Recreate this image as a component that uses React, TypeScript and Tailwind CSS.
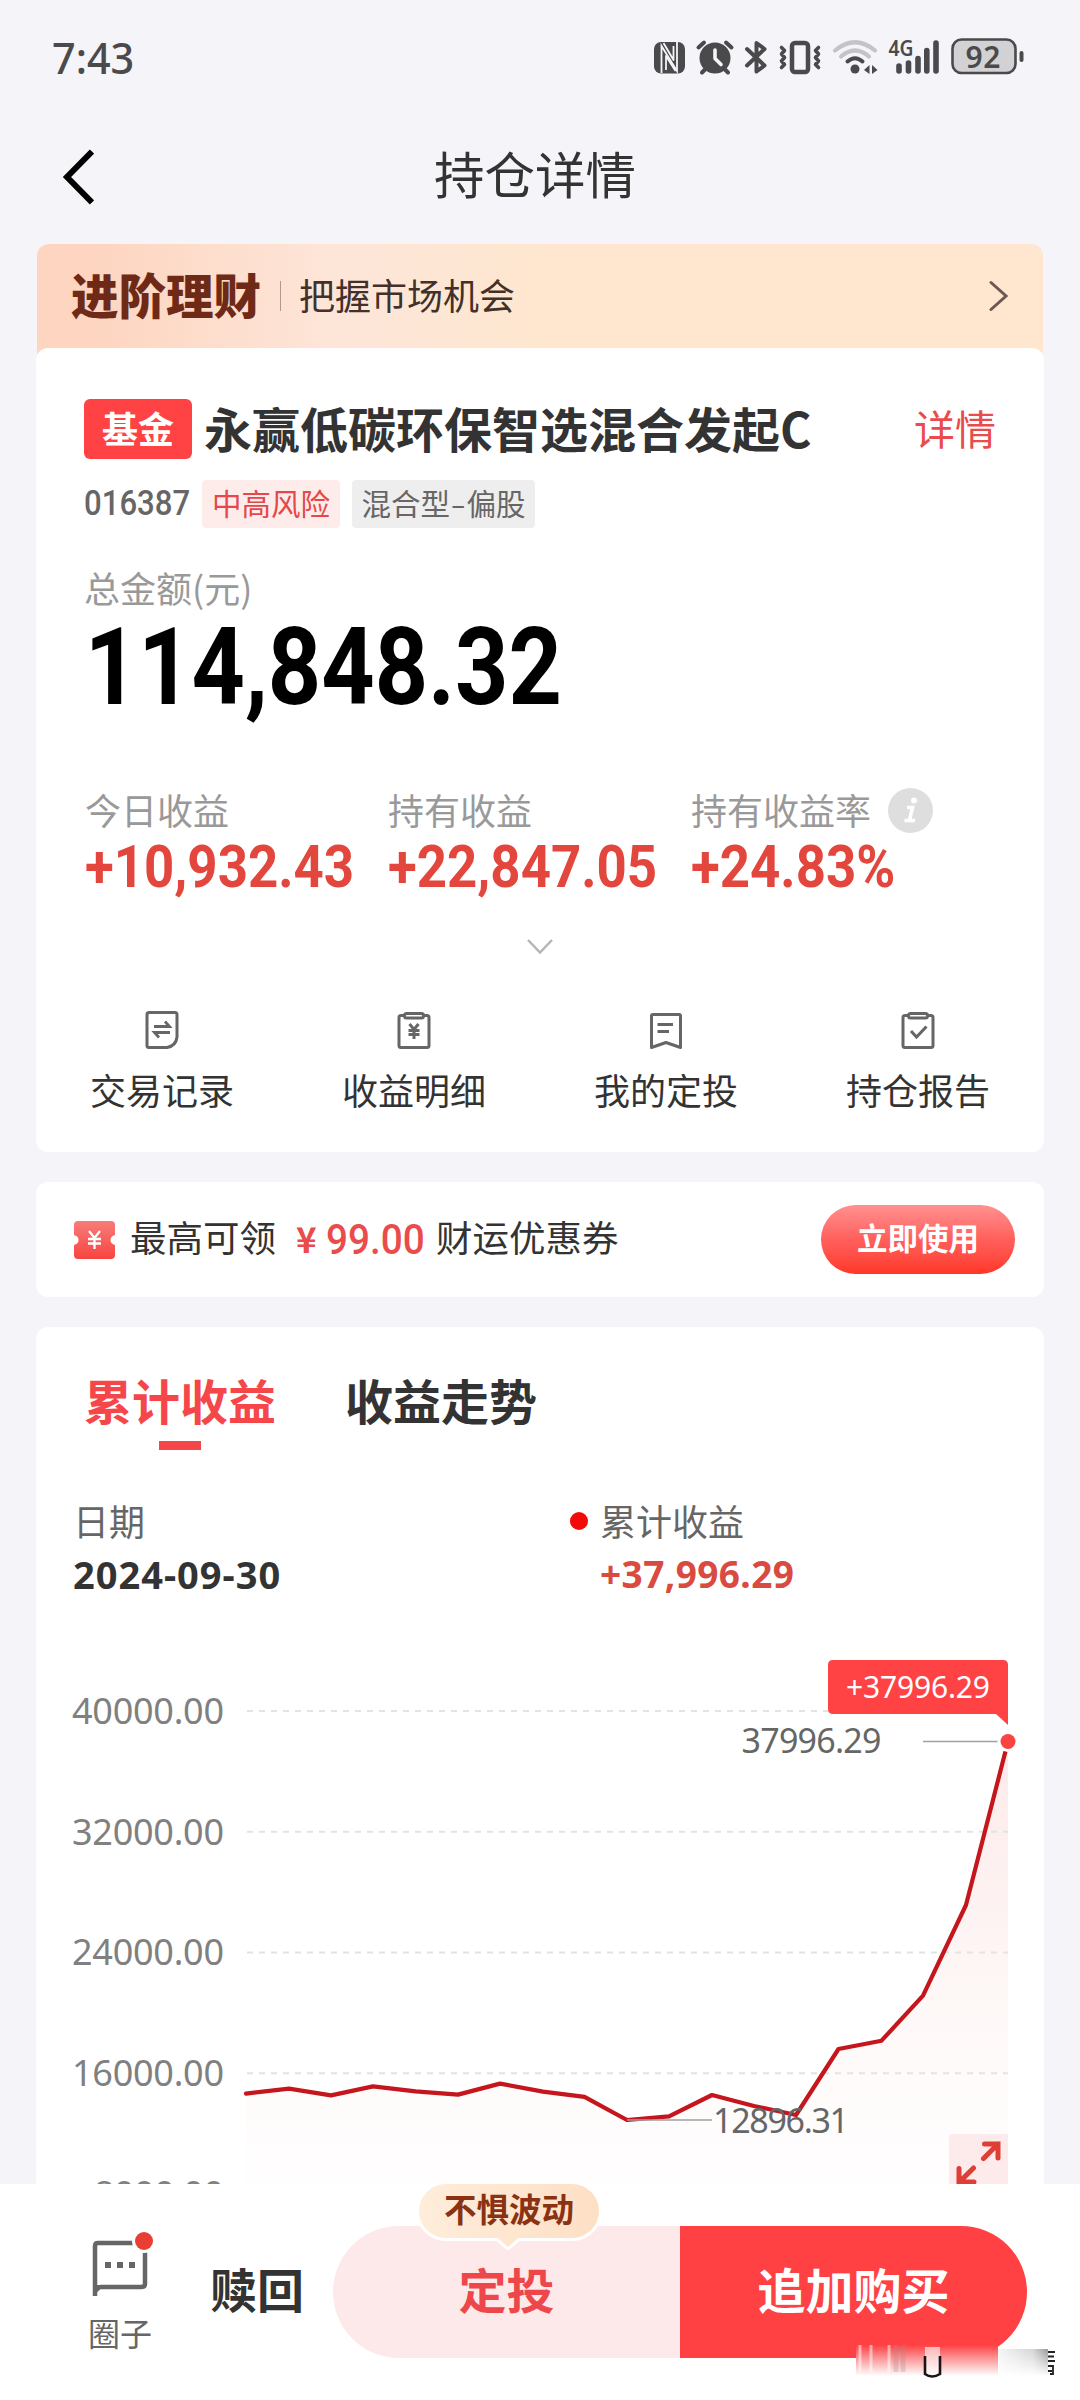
import type { ReactNode } from "react";

const Y_TICKS = [
  { label: "40000.00", y: 1711 },
  { label: "32000.00", y: 1831.7 },
  { label: "24000.00", y: 1952.4 },
  { label: "16000.00", y: 2073.3 },
];

const POINTS =
  "246,2093.6 289,2088.6 331,2095.4 373,2086.4 415.6,2091.4 458,2094.6 500,2083.6 543,2091.6 584.5,2096.8 627,2120 669,2116.4 712,2095 754,2106 796,2115 838.5,2049 881.5,2040.7 923,1995.7 966,1905 1008,1741.5";

function StatusIcons() {
  return (
    <svg width="380" height="50" viewBox="650 30 380 50" fill="none" stroke="#4a4a4c" strokeLinecap="round" strokeLinejoin="round">
      {/* nfc */}
      <rect x="654" y="42" width="31" height="31.5" rx="7" fill="#4a4a4c" stroke="none" />
      <path d="M661.500 73V46L677 71V42" stroke="#f4f4f9" strokeWidth="1.800" strokeLinecap="butt" strokeLinejoin="miter" />
      <path d="M666 70V56L675.500 71M663.500 43L673.500 60V46" stroke="#f4f4f9" strokeWidth="1.800" strokeLinecap="butt" />
      {/* alarm */}
      <circle cx="715" cy="58" r="15.500" fill="#4a4a4c" stroke="none" />
      <path d="M698.500 47.500L704 42.500M731.500 47.500L726 42.500M702 72.500L705.500 69M728 72.500L724.500 69" strokeWidth="4" />
      <path d="M715 50V58.500L721 64.500" stroke="#f4f4f9" strokeWidth="3.600" />
      {/* bluetooth */}
      <path d="M747 49L764.500 65.500L756.500 71.500V43L764.500 49L747 65.500" strokeWidth="4" />
      {/* vibrate */}
      <rect x="792" y="43" width="16" height="29" rx="3" strokeWidth="4.500" />
      <path d="M781.500 47.500L784.500 50.500L781.500 54L784.500 57.500L781.500 61L784.500 64.500L781.500 67.500M818.500 47.500L815.500 50.500L818.500 54L815.500 57.500L818.500 61L815.500 64.500L818.500 67.500" strokeWidth="3.600" />
      {/* wifi */}
      <g stroke="#c3c3c8" strokeWidth="4.200">
        <path d="M835 50.500Q855 34 875 50.500" />
        <path d="M841 56.500Q855 44.500 869 56.500" />
      </g>
      <path d="M847.500 61.500Q855 55 862.500 61.500" strokeWidth="4" />
      <circle cx="855" cy="69" r="4.500" fill="#4a4a4c" stroke="none" />
      <path d="M864 70L869.500 65V74ZM877.500 70L872 65V74Z" fill="#4a4a4c" stroke="none" />
      {/* signal */}
      <text x="888.500" y="55.500" fill="#4a4a4c" stroke="none" textLength="25" lengthAdjust="spacingAndGlyphs" className="font-['Noto_Sans'] text-[21px] font-semibold">4G</text>
      <path d="M899 66V71M908.500 63V71M918 58.500V71M926.800 50.500V71M936 43V71" strokeWidth="5.600" />
      {/* battery */}
      <rect x="952.500" y="39.500" width="63" height="33.500" rx="9" fill="#d2d2d5" strokeWidth="2.600" />
      <path d="M1021.500 53V60" strokeWidth="4" />
      <text x="965.500" y="67.500" fill="#4a4a4c" stroke="none" textLength="35" className="font-['Noto_Sans'] text-[30px] font-semibold">92</text>
    </svg>
  );
}

function RecordIcon() {
  return (
    <svg width="34" height="38" viewBox="0 0 34 38" fill="none" stroke="#666" strokeWidth="3">
      <path d="M4 1.500H30Q32 1.500 32 3.500V26Q31 35 22 36.500H4Q2 36.500 2 34.500V3.500Q2 1.500 4 1.500Z" />
      <path d="M9 15.500H24.500L20 10.500M25 21.500H9.500L14 26.500" strokeWidth="2.800" />
    </svg>
  );
}

function ClipIcon({ children }: { children: ReactNode }) {
  return (
    <svg width="34" height="38" viewBox="0 0 34 38" fill="none" stroke="#666" strokeWidth="3">
      <path d="M7 4.500H4Q2 4.500 2 6.500V34.500Q2 36.500 4 36.500H30Q32 36.500 32 34.500V6.500Q32 4.500 30 4.500H27" />
      <rect x="7.500" y="2.500" width="19" height="4.500" rx="2" />
      {children}
    </svg>
  );
}

function PlanIcon() {
  return (
    <svg width="34" height="38" viewBox="0 0 34 38" fill="none" stroke="#666" strokeWidth="3" strokeLinejoin="round">
      <path d="M4 3.500H30Q31.500 3.500 31.500 5V36.500L17 31.500L2.500 36.500V5Q2.500 3.500 4 3.500Z" />
      <path d="M8.500 13.500H24M8.500 20.500H20" />
    </svg>
  );
}

const SHORTCUTS = [
  { label: "交易记录", icon: <RecordIcon /> },
  {
    label: "收益明细",
    icon: (
      <ClipIcon>
        <path d="M12.500 13L17 18.500L21.500 13M17 18.500V28M11.500 19.500H22.500M11.500 23.500H22.500" />
      </ClipIcon>
    ),
  },
  { label: "我的定投", icon: <PlanIcon /> },
  {
    label: "持仓报告",
    icon: (
      <ClipIcon>
        <path d="M10 20L15.500 26L25.500 15.500" />
      </ClipIcon>
    ),
  },
];

const METRICS = [
  { label: "今日收益", value: "+10,932.43" },
  { label: "持有收益", value: "+22,847.05" },
  { label: "持有收益率", value: "+24.83%", info: true },
];

function Chart() {
  return (
    <svg width="1008" height="544" viewBox="36 1640 1008 544" fill="none" className="mt-[46px] font-['Noto_Sans']">
      <defs>
        <linearGradient id="area" x1="0" y1="1741" x2="0" y2="2184" gradientUnits="userSpaceOnUse">
          <stop offset="0" stopColor="#fdeaea" />
          <stop offset="0.7" stopColor="#fefaf9" />
          <stop offset="1" stopColor="#fffefe" />
        </linearGradient>
      </defs>
      <polygon points={`246,2184 ${POINTS} 1008,2184`} fill="url(#area)" />
      {Y_TICKS.map((t) => (
        <g key={t.label}>
          <text x="72" y={t.y + 13} fill="#808080" textLength="152" className="text-[36px]">{t.label}</text>
          <path d={`M247 ${t.y}H1008`} stroke="#e3e3e3" strokeWidth="2" strokeDasharray="6 6" />
        </g>
      ))}
      <text x="94" y="2207" fill="#808080" textLength="130" className="text-[36px]">8000.00</text>
      <polyline points={POINTS} stroke="#c4161c" strokeWidth="4.200" strokeLinejoin="round" strokeLinecap="round" />
      <path d="M627 2120H712M923 1741.500H998" stroke="#a0a0a0" strokeWidth="1.500" />
      <text x="713" y="2132.500" fill="#666" textLength="136" className="text-[34px]">12896.31</text>
      <text x="741.500" y="1753" fill="#666" textLength="140" className="text-[34px]">37996.29</text>
      <circle cx="1008" cy="1741.500" r="10.500" fill="#fff" />
      <circle cx="1008" cy="1741.500" r="7.500" fill="#fb4343" />
      <path d="M833 1660H1003Q1008 1660 1008 1665V1725L996 1714H833Q828 1714 828 1709V1665Q828 1660 833 1660Z" fill="#ff4345" />
      <text x="846" y="1697.500" fill="#fff" textLength="144" className="text-[30px]">+37996.29</text>
      {/* full screen toggle */}
      <path d="M949 2184V2138Q949 2134 953 2134H1008V2184Z" fill="#fdeaea" />
      <path d="M983.500 2158.500L998 2144M984.500 2144H998V2158M973.500 2168L959 2182.500M959 2168.500V2182H974" stroke="#dd3f36" strokeWidth="5" strokeLinecap="round" />
    </svg>
  );
}

export default function App() {
  return (
    <div className="relative flex h-[2400px] w-[1080px] flex-col overflow-hidden bg-[#f4f4f9] font-['Noto_Sans_CJK_SC',sans-serif] text-[#333]">
      <main className="flex h-[2184px] shrink-0 flex-col overflow-hidden">
        <div className="flex h-[116px] shrink-0 items-start justify-between pt-[30px] pr-[50px] pl-[52px]">
          <span className="origin-left scale-x-[0.94] font-['Noto_Sans'] text-[44px] leading-[54px] font-medium text-[#4a4a4c]">7:43</span>
          <StatusIcons />
        </div>

        <header className="flex h-[128px] shrink-0 items-start pt-[30px] pl-[58px]">
          <svg width="36" height="60" viewBox="0 0 36 60" fill="none" stroke="#000" strokeWidth="6">
            <path d="M34 5.500L9 31L34 56.500" />
          </svg>
          <h1 className="-mt-[2px] ml-[340px] text-[50.500px] leading-[56px]">持仓详情</h1>
        </header>

        <div className="mx-[37px] flex h-[116px] shrink-0 items-center rounded-t-xl bg-linear-to-r from-[#fdd5c0] from-5% via-[#fde6d9] via-30% to-[#fee6cf] to-50% pr-[35px] pb-3 pl-[34px]">
          <span className="-mt-1 text-[47.500px] leading-[50px] font-black text-[#6e2a16]">进阶理财</span>
          <span className="ml-[19px] h-[30px] w-px bg-[#b49a8c]" />
          <span className="-mt-1 ml-[18px] text-[36px] leading-[44px] text-[#42302a]">把握市场机会</span>
          <svg width="20" height="32" viewBox="0 0 20 32" fill="none" stroke="#6b5a52" strokeWidth="3" strokeLinecap="round" className="ml-auto">
            <path d="M3 2.500L18 16L3 29.500" />
          </svg>
        </div>

        <section className="mx-9 -mt-3 flex h-[804px] shrink-0 flex-col rounded-xl bg-white pt-[51px]">
          <div className="flex h-[60px] items-center pr-12 pl-12">
            <span className="flex h-[60px] w-[108px] items-center justify-center rounded-md bg-[#ff4345] pb-1 text-[36px] leading-none font-bold text-white">基金</span>
            <h2 className="-mt-[5px] ml-3 text-[48px] leading-[56px] font-bold whitespace-nowrap">永赢低碳环保智选混合发起C</h2>
            <span className="-mt-1 ml-auto text-[41px] leading-[48px] text-[#ea4b4b]">详情</span>
          </div>
          <div className="mt-[21px] flex h-12 items-center pl-12 text-[29.500px]">
            <span className="-mt-[2px] w-[118px] origin-left scale-x-[0.89] font-[Roboto] text-[35px] leading-none font-medium text-[#666]">016387</span>
            <span className="flex h-12 w-[138px] items-center justify-center rounded bg-[#fdecea] pb-[3px] leading-none text-[#e5484a]">中高风险</span>
            <span className="ml-3 flex h-12 w-[183px] items-center justify-center rounded bg-[#eeeeee] pb-[3px] leading-none text-[#666]">
              混合型<span className="scale-x-150 px-[3px]">-</span>偏股
            </span>
          </div>
          <div className="mt-[39px] h-10 pl-12 text-[36px] leading-10 text-[#999]">总金额(元)</div>
          <div className="mt-[21px] h-20 origin-left scale-x-[0.87] pl-[56px] font-[Roboto] text-[107px] leading-[80px] font-bold text-black">114,848.32</div>

          <div className="mt-[79px] flex pl-[49px]">
            {METRICS.map((m) => (
              <div key={m.label} className="w-[303px] shrink-0">
                <div className="flex h-[46px] items-center text-[36px] leading-10 text-[#999]">
                  <span className="-mt-[3px]">{m.label}</span>
                  {m.info && (
                    <svg width="45" height="45" viewBox="0 0 45 45" className="ml-[17px]">
                      <circle cx="22.500" cy="22.500" r="22.500" fill="#dedede" />
                      <circle cx="26" cy="12.500" r="3" fill="#fff" />
                      <path d="M19 19.500H24.500L21.500 32M16.500 32.500H27" fill="none" stroke="#fff" strokeWidth="3.600" />
                    </svg>
                  )}
                </div>
                <div className="mt-1 h-[60px] origin-left scale-x-[0.88] font-[Roboto] text-[60px] leading-[60px] font-bold whitespace-nowrap text-[#e2463c]">{m.value}</div>
              </div>
            ))}
          </div>

          <svg width="28" height="18" viewBox="0 0 28 18" fill="none" stroke="#b5b5b5" strokeWidth="2.500" className="mt-[41px] self-center">
            <path d="M2 2L14 14.500L26 2" />
          </svg>

          <div className="mt-[55px] grid grid-cols-4">
            {SHORTCUTS.map((s) => (
              <div key={s.label} className="flex flex-col items-center">
                {s.icon}
                <span className="mt-5 text-[36px] leading-10">{s.label}</span>
              </div>
            ))}
          </div>
        </section>

        <section className="mx-9 mt-[30px] flex h-[115px] shrink-0 items-center rounded-xl bg-white pr-[29px] pl-[38px] text-[36.500px] leading-[44px]">
          <svg width="41" height="38" viewBox="0 0 41 38" fill="none">
            <defs>
              <linearGradient id="ticket" x1="0" y1="0" x2="0" y2="38" gradientUnits="userSpaceOnUse">
                <stop stopColor="#f77d7a" />
                <stop offset="1" stopColor="#f8443f" />
              </linearGradient>
            </defs>
            <path d="M4 0H37Q41 0 41 4V14Q36.500 15 36.500 19Q36.500 23 41 24V34Q41 38 37 38H4Q0 38 0 34V24Q4.500 23 4.500 19Q4.500 15 0 14V4Q0 0 4 0Z" fill="url(#ticket)" />
            <path d="M15 10L20.500 17L26 10M20.500 17V28M14 18H27M14 22.500H27" stroke="#fff" strokeWidth="2.300" />
          </svg>
          <span className="-mt-[5px] ml-[15px]">最高可领</span>
          <span className="-mt-[3px] ml-5 w-[30px] text-[35px] font-bold text-[#ea4b4b]">¥</span>
          <span className="-mt-[2px] w-[110px] origin-left scale-x-[0.9] font-[Roboto] text-[43px] font-medium text-[#ea4b4b]">99.00</span>
          <span className="-mt-[5px]">财运优惠券</span>
          <button className="ml-auto h-[69px] w-[194px] rounded-full bg-linear-to-b from-[#ff9090] via-[#ff5f5c] to-[#ff3626] pb-[5px] text-[30.500px] leading-[60px] font-bold text-white">立即使用</button>
        </section>

        <section className="mx-9 mt-[30px] flex h-[900px] shrink-0 flex-col rounded-t-xl bg-white pt-[42px]">
          <div className="flex gap-[69px] pl-12 text-[48px] leading-[60px] font-bold">
            <div className="flex flex-col items-center text-[#f54749]">
              累计收益
              <span className="mt-3 h-[9px] w-[42px] bg-[#f54749]" />
            </div>
            <div>收益走势</div>
          </div>
          <div className="mt-[50px] flex pl-[37px] text-[36px] leading-10 text-[#666]">
            <div className="w-[497px]">
              <div>日期</div>
              <div className="mt-[14px] font-['Noto_Sans'] text-[38px] leading-10 font-bold tracking-[1px] text-[#333]">2024-09-30</div>
            </div>
            <div className="flex">
              <span className="mt-[12px] size-[18px] rounded-full bg-[#f50a0a]" />
              <div className="ml-[12px]">
                <div>累计收益</div>
                <div className="mt-[14px] font-['Noto_Sans'] text-[37px] leading-10 font-bold tracking-[0.400px] text-[#d94a40]">+37,996.29</div>
              </div>
            </div>
          </div>
          <Chart />
        </section>
      </main>

      <footer className="flex h-[216px] shrink-0 items-start bg-white">
        <div className="mt-[44px] ml-[78px] flex w-[84px] flex-col items-center">
          <svg width="84" height="72" viewBox="78 2228 84 72" fill="none">
            <path d="M95 2296V2246Q95 2243 98 2243H141Q145 2243 145 2246V2284Q145 2287 141 2287H100" stroke="#666" strokeWidth="4.500" />
            <path d="M93 2285H105L93 2296Z" fill="#666" />
            <path d="M105 2265H111M117 2265H123M129 2265H135" stroke="#666" strokeWidth="6" />
            <circle cx="144" cy="2241" r="12" fill="#fff" />
            <circle cx="144" cy="2241" r="9" fill="#e93e33" />
          </svg>
          <span className="mt-[12px] text-[32px] leading-10 text-[#666]">圈子</span>
        </div>
        <span className="mt-[76px] ml-[48px] text-[47px] leading-[56px] font-bold">赎回</span>
        <div className="relative mt-[42px] ml-[29px] flex text-[48px] leading-[128px] font-bold">
          <button className="h-[132px] w-[347px] rounded-l-full bg-[#fde9e9] pb-2 leading-[124px] text-[#ee474b]">定投</button>
          <button className="h-[132px] w-[347px] rounded-r-full bg-[#ff4144] pb-2 leading-[124px] text-white">追加购买</button>
          <div className="absolute -top-[42px] left-[83px] h-[66px] w-[186px]">
            <svg width="186" height="66" viewBox="0 0 186 66" className="absolute">
              <defs>
                <linearGradient id="bubble" x1="0" y1="0" x2="1" y2="0">
                  <stop stopColor="#ffedda" />
                  <stop offset="1" stopColor="#fddfc5" />
                </linearGradient>
              </defs>
              <path d="M30 -1.500H156A28.500 28.500 0 0 1 156 55.500H103L92 65L81 55.500H30A28.500 28.500 0 0 1 30 -1.500Z" fill="url(#bubble)" stroke="#fff" strokeWidth="3" />
            </svg>
            <span className="relative block text-center text-[32.500px] leading-[48px] text-[#8a3212]">不惧波动</span>
          </div>
        </div>
      </footer>

      {/* smeared author mark in the corner */}
      <svg width="204" height="36" viewBox="856 2345 204 36" fill="none" className="absolute top-[2345px] left-[856px]">
        <defs>
          <linearGradient id="smear" x1="0" y1="2345" x2="0" y2="2376" gradientUnits="userSpaceOnUse">
            <stop stopColor="#ff4144" />
            <stop offset="0.45" stopColor="#fb9a9b" />
            <stop offset="1" stopColor="#fff" />
          </linearGradient>
          <linearGradient id="fade" x1="998" y1="0" x2="1048" y2="0" gradientUnits="userSpaceOnUse">
            <stop stopColor="#f4f4f4" />
            <stop offset="0.7" stopColor="#cfcfcf" />
            <stop offset="1" stopColor="#8a8a8a" />
          </linearGradient>
          <linearGradient id="veil" x1="0" y1="2345" x2="0" y2="2376" gradientUnits="userSpaceOnUse">
            <stop stopColor="#fff" stopOpacity="0" />
            <stop offset="1" stopColor="#fff" />
          </linearGradient>
        </defs>
        <rect x="856" y="2345" width="142" height="31" fill="url(#smear)" />
        <path d="M860 2345V2372M871 2345V2372M889 2345V2372" stroke="#fff" strokeOpacity="0.5" strokeWidth="3" />
        <path d="M896 2345V2372M903 2345V2372" stroke="#a88" strokeOpacity="0.3" strokeWidth="5" />
        <path d="M925 2347V2373Q932 2380 940 2373V2347Z" fill="#fff" fillOpacity="0.6" />
        <path d="M925 2356V2374Q932 2379 940 2374V2356" stroke="#1c1416" strokeWidth="2.600" />
        <rect x="998" y="2349" width="50" height="27" fill="url(#fade)" />
        <rect x="998" y="2349" width="50" height="27" fill="url(#veil)" />
        <path d="M1048 2352H1055M1048 2356.500H1054M1048 2361H1055M1048 2366H1053V2374H1050M1048 2371H1052" stroke="#222" strokeWidth="1.800" />
      </svg>
    </div>
  );
}
